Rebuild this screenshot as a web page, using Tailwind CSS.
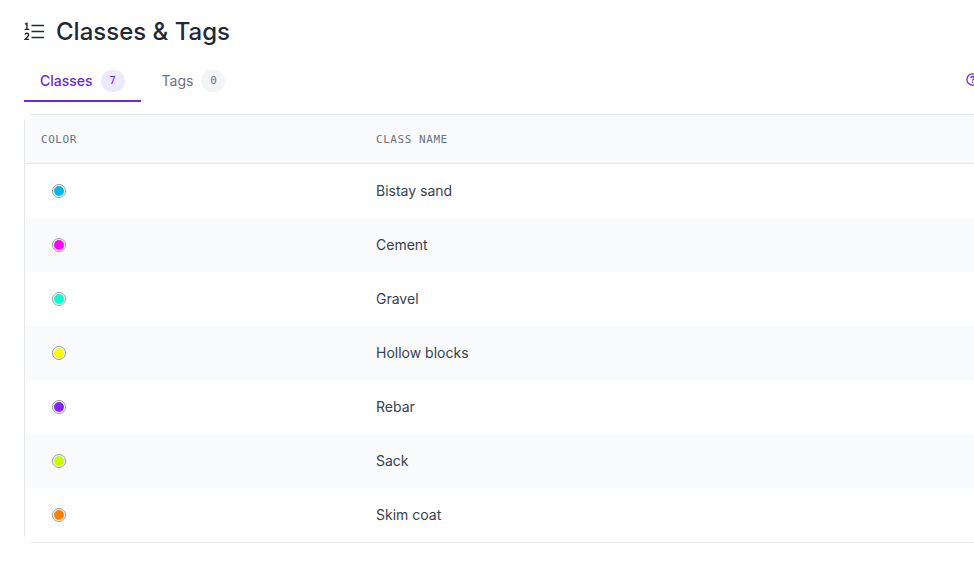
<!DOCTYPE html>
<html lang="en">
<head>
<meta charset="utf-8">
<meta name="viewport" content="width=device-width, initial-scale=1">
<title>Classes &amp; Tags</title>
<script src="https://cdn.jsdelivr.net/npm/@tailwindcss/browser@4"></script>
</head>
<body class="overflow-x-hidden bg-white font-['Inter',sans-serif] text-[#1f2937]">
<main class="-mr-6 pt-4 pl-6">
  <header class="flex h-8 items-center gap-3">
    <svg class="size-5 shrink-0" viewBox="0 0 20 20" fill="none" stroke="currentColor" aria-hidden="true">
      <path stroke-width="1.3" d="M7.5 3.5H20M7.5 9.5H20M7.5 15.5H20"/>
      <path stroke-width="1.4" d="M1 2.2L2.9 1.3V7.4M.6 7.4H5.2M.9 12.5Q1.2 11.2 2.8 11.2Q4.6 11.2 4.6 12.8Q4.6 13.8 3.4 15L1 17.4H5.1"/>
    </svg>
    <h1 class="text-2xl font-medium">Classes &amp; Tags</h1>
  </header>
  <nav class="mt-3 flex items-start pr-4" aria-label="Classes and tags">
    <button type="button" class="flex h-[42px] items-center gap-2 border-b-2 border-[#6d28d9] px-4 pt-[2px] text-sm font-medium text-[#6d28d9]">Classes <span class="flex h-[22px] w-6 items-center justify-center rounded-full bg-[#ede9fe] font-['DejaVu_Sans_Mono',monospace] text-[11px] font-normal">7</span></button>
    <button type="button" class="ml-[5px] flex h-[42px] items-center gap-2 border-b-2 border-transparent px-4 pt-[2px] text-sm font-normal text-[#6b7280]">Tags <span class="flex h-[22px] w-6 items-center justify-center rounded-full bg-[#f3f4f6] font-['DejaVu_Sans_Mono',monospace] text-[11px]">0</span></button>
    <a href="#help" class="mt-3 ml-auto text-[#6d28d9]" aria-label="Help">
      <svg class="size-4" viewBox="0 0 16 16" fill="none" stroke="currentColor" stroke-width="1.3" aria-hidden="true"><circle cx="6.5" cy="7.5" r="5.6"/><path d="M4.8 6.1Q4.9 4.5 6.6 4.5Q8.4 4.5 8.4 6Q8.4 6.9 7.4 7.4Q6.6 7.8 6.6 8.7M6.6 9.7V11"/></svg>
    </a>
  </nav>
  <div class="mt-3 rounded-lg border border-[#e5e7eb]">
    <table class="w-full table-fixed border-separate border-spacing-0 text-left text-sm text-[#374151]">
      <colgroup><col class="w-[335px]"><col></colgroup>
      <thead class="font-['DejaVu_Sans_Mono',monospace] text-[11px] text-[#6b7280]">
        <tr class="h-[49px]">
          <th scope="col" class="border-b border-[#e5e7eb] bg-[#f9fafb] px-4 pt-[2px] font-normal tracking-wider">COLOR</th>
          <th scope="col" class="border-b border-[#e5e7eb] bg-[#f9fafb] px-4 pt-[2px] font-normal tracking-wider">CLASS NAME</th>
        </tr>
      </thead>
      <tbody>
        <tr class="h-[54px] even:bg-[#f9fafb]"><td class="px-4"><span class="ml-[11px] block size-[14px] rounded-full border border-[#999999] p-px"><span class="block size-full rounded-full bg-[#00b7eb]"></span></span></td><td class="px-4">Bistay sand</td></tr>
        <tr class="h-[54px] even:bg-[#f9fafb]"><td class="px-4"><span class="ml-[11px] block size-[14px] rounded-full border border-[#999999] p-px"><span class="block size-full rounded-full bg-[#ff00ff]"></span></span></td><td class="px-4">Cement</td></tr>
        <tr class="h-[54px] even:bg-[#f9fafb]"><td class="px-4"><span class="ml-[11px] block size-[14px] rounded-full border border-[#999999] p-px"><span class="block size-full rounded-full bg-[#00ffce]"></span></span></td><td class="px-4">Gravel</td></tr>
        <tr class="h-[54px] even:bg-[#f9fafb]"><td class="px-4"><span class="ml-[11px] block size-[14px] rounded-full border border-[#999999] p-px"><span class="block size-full rounded-full bg-[#ffff00]"></span></span></td><td class="px-4">Hollow blocks</td></tr>
        <tr class="h-[54px] even:bg-[#f9fafb]"><td class="px-4"><span class="ml-[11px] block size-[14px] rounded-full border border-[#999999] p-px"><span class="block size-full rounded-full bg-[#8622ff]"></span></span></td><td class="px-4">Rebar</td></tr>
        <tr class="h-[54px] even:bg-[#f9fafb]"><td class="px-4"><span class="ml-[11px] block size-[14px] rounded-full border border-[#999999] p-px"><span class="block size-full rounded-full bg-[#c7fc00]"></span></span></td><td class="px-4">Sack</td></tr>
        <tr class="h-[54px] even:bg-[#f9fafb]"><td class="bg-white px-4"><span class="ml-[11px] block size-[14px] rounded-full border border-[#999999] p-px"><span class="block size-full rounded-full bg-[#ff8000]"></span></span></td><td class="px-4">Skim coat</td></tr>
      </tbody>
    </table>
  </div>
</main>
</body>
</html>
